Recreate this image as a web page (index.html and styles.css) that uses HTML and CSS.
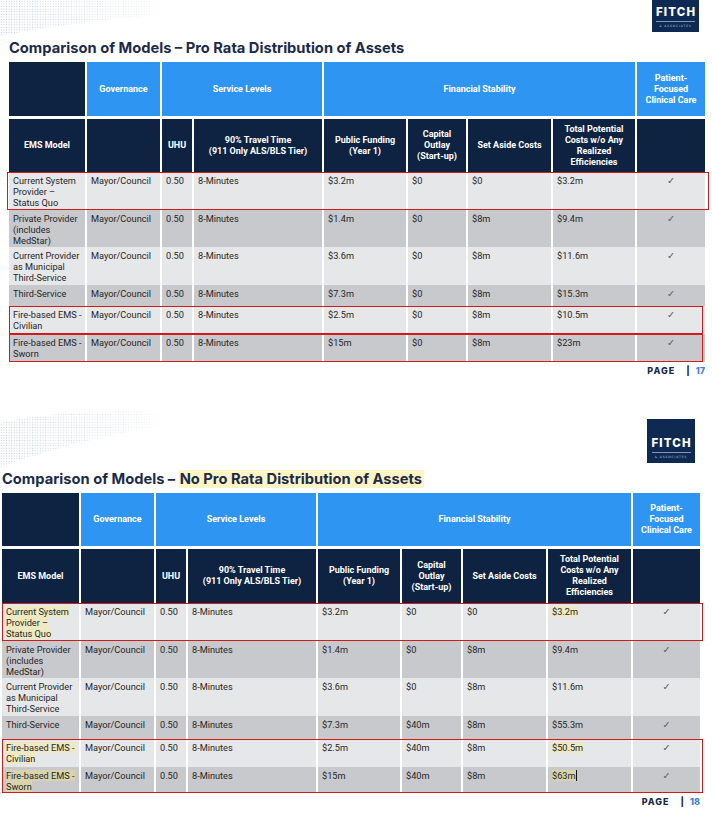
FILE: index.html
```html
<!DOCTYPE html>
<html lang="en">
<head>
<meta charset="utf-8">
<title>Comparison of Models</title>
<link rel="stylesheet" href="styles.css">
</head>
<body>

<section class="slide slide-1">
  <div class="top top-1">
    <svg class="wave wave-1" width="170" height="36" viewBox="0 0 170 36" aria-hidden="true">
      <defs>
        <pattern id="dots1" width="2.6" height="2.6" patternUnits="userSpaceOnUse">
          <circle cx="1.3" cy="1.3" r="0.6" fill="#b7c3d1"/>
        </pattern>
        <linearGradient id="fade1" x1="0" x2="1" y1="0" y2="0">
          <stop offset="0" stop-color="#fff" stop-opacity="0.9"/>
          <stop offset="0.75" stop-color="#fff" stop-opacity="0.35"/>
          <stop offset="1" stop-color="#fff" stop-opacity="0"/>
        </linearGradient>
        <mask id="m1"><rect width="170" height="36" fill="url(#fade1)"/></mask>
      </defs>
      <path d="M0,0 L170,0 L170,14 C120,18 60,24 0,36 Z" fill="url(#dots1)" mask="url(#m1)"/>
    </svg>
    <div class="logo logo-1">
      <span class="logo-name">FITCH</span>
      <span class="logo-rule"></span>
      <span class="logo-sub">&amp; ASSOCIATES</span>
    </div>
  </div>

  <h1 class="title title-1">Comparison of Models – Pro Rata Distribution of Assets</h1>

  <div class="table table-1">
    <div class="hd1 navy c1"></div>
    <div class="hd1 c2">Governance</div>
    <div class="hd1 c3 span2">Service Levels</div>
    <div class="hd1 c5 span4">Financial Stability</div>
    <div class="hd1 c9">Patient-<br>Focused<br>Clinical Care</div>

    <div class="hd2">EMS Model</div>
    <div class="hd2"></div>
    <div class="hd2">UHU</div>
    <div class="hd2">90% Travel Time<br>(911 Only ALS/BLS Tier)</div>
    <div class="hd2">Public Funding<br>(Year 1)</div>
    <div class="hd2">Capital<br>Outlay<br>(Start-up)</div>
    <div class="hd2">Set Aside Costs</div>
    <div class="hd2">Total Potential<br>Costs w/o Any<br>Realized<br>Efficiencies</div>
    <div class="hd2"></div>

    <div class="row lt r3">
      <div>Current System<br>Provider –<br>Status Quo</div><div>Mayor/Council</div><div>0.50</div><div>8-Minutes</div><div>$3.2m</div><div>$0</div><div>$0</div><div>$3.2m</div><div class="chk">✓</div>
    </div>
    <div class="row dk r4">
      <div>Private Provider<br>(includes<br>MedStar)</div><div>Mayor/Council</div><div>0.50</div><div>8-Minutes</div><div>$1.4m</div><div>$0</div><div>$8m</div><div>$9.4m</div><div class="chk">✓</div>
    </div>
    <div class="row lt r5">
      <div>Current Provider<br>as Municipal<br>Third-Service</div><div>Mayor/Council</div><div>0.50</div><div>8-Minutes</div><div>$3.6m</div><div>$0</div><div>$8m</div><div>$11.6m</div><div class="chk">✓</div>
    </div>
    <div class="row dk r6">
      <div>Third-Service</div><div>Mayor/Council</div><div>0.50</div><div>8-Minutes</div><div>$7.3m</div><div>$0</div><div>$8m</div><div>$15.3m</div><div class="chk">✓</div>
    </div>
    <div class="row lt r7">
      <div>Fire-based EMS -<br>Civilian</div><div>Mayor/Council</div><div>0.50</div><div>8-Minutes</div><div>$2.5m</div><div>$0</div><div>$8m</div><div>$10.5m</div><div class="chk">✓</div>
    </div>
    <div class="row dk r8">
      <div>Fire-based EMS -<br>Sworn</div><div>Mayor/Council</div><div>0.50</div><div>8-Minutes</div><div>$15m</div><div>$0</div><div>$8m</div><div>$23m</div><div class="chk">✓</div>
    </div>

    <div class="mark mark-1a"></div>
    <div class="mark mark-1b"></div>
    <div class="mark mark-1c"></div>
  </div>

  <p class="page-no"><span class="pg-word">PAGE</span><span class="pg-bar">|</span><span class="pg-num">17</span></p>
</section>

<section class="slide slide-2">
  <div class="top top-2">
    <svg class="wave wave-2" width="170" height="75" viewBox="0 0 170 75" aria-hidden="true">
      <defs>
        <pattern id="dots2" width="2.6" height="2.6" patternUnits="userSpaceOnUse">
          <circle cx="1.3" cy="1.3" r="0.6" fill="#b7c3d1"/>
        </pattern>
        <linearGradient id="fade2" x1="0" x2="1" y1="0" y2="0">
          <stop offset="0" stop-color="#fff" stop-opacity="0.9"/>
          <stop offset="0.75" stop-color="#fff" stop-opacity="0.35"/>
          <stop offset="1" stop-color="#fff" stop-opacity="0"/>
        </linearGradient>
        <mask id="m2"><rect width="170" height="75" fill="url(#fade2)"/></mask>
      </defs>
      <path d="M0,28 C50,16 110,16 170,16 L170,30 C115,38 55,52 0,72 Z" fill="url(#dots2)" mask="url(#m2)"/>
    </svg>
    <div class="logo logo-2">
      <span class="logo-name">FITCH</span>
      <span class="logo-rule"></span>
      <span class="logo-sub">&amp; ASSOCIATES</span>
    </div>
  </div>

  <h1 class="title title-2">Comparison of Models – <span class="title-hl">No Pro Rata Distribution of Assets</span></h1>

  <div class="table table-2">
    <div class="hd1 navy c1"></div>
    <div class="hd1 c2">Governance</div>
    <div class="hd1 c3 span2">Service Levels</div>
    <div class="hd1 c5 span4">Financial Stability</div>
    <div class="hd1 c9">Patient-<br>Focused<br>Clinical Care</div>

    <div class="hd2">EMS Model</div>
    <div class="hd2"></div>
    <div class="hd2">UHU</div>
    <div class="hd2">90% Travel Time<br>(911 Only ALS/BLS Tier)</div>
    <div class="hd2">Public Funding<br>(Year 1)</div>
    <div class="hd2">Capital<br>Outlay<br>(Start-up)</div>
    <div class="hd2">Set Aside Costs</div>
    <div class="hd2">Total Potential<br>Costs w/o Any<br>Realized<br>Efficiencies</div>
    <div class="hd2"></div>

    <div class="row lt r3">
      <div><span class="hl">Current System<br>Provider –<br>Status Quo</span></div><div>Mayor/Council</div><div>0.50</div><div>8-Minutes</div><div>$3.2m</div><div>$0</div><div>$0</div><div><span class="hl">$3.2m</span></div><div class="chk">✓</div>
    </div>
    <div class="row dk r4">
      <div>Private Provider<br>(includes<br>MedStar)</div><div>Mayor/Council</div><div>0.50</div><div>8-Minutes</div><div>$1.4m</div><div>$0</div><div>$8m</div><div>$9.4m</div><div class="chk">✓</div>
    </div>
    <div class="row lt r5">
      <div>Current Provider<br>as Municipal<br>Third-Service</div><div>Mayor/Council</div><div>0.50</div><div>8-Minutes</div><div>$3.6m</div><div>$0</div><div>$8m</div><div>$11.6m</div><div class="chk">✓</div>
    </div>
    <div class="row dk r6">
      <div>Third-Service</div><div>Mayor/Council</div><div>0.50</div><div>8-Minutes</div><div>$7.3m</div><div>$40m</div><div>$8m</div><div>$55.3m</div><div class="chk">✓</div>
    </div>
    <div class="row lt r7">
      <div><span class="hl">Fire-based EMS -<br>Civilian</span></div><div>Mayor/Council</div><div>0.50</div><div>8-Minutes</div><div>$2.5m</div><div>$40m</div><div>$8m</div><div><span class="hl">$50.5m</span></div><div class="chk">✓</div>
    </div>
    <div class="row dk r8">
      <div><span class="hl">Fire-based EMS -<br>Sworn</span></div><div>Mayor/Council</div><div>0.50</div><div>8-Minutes</div><div>$15m</div><div>$40m</div><div>$8m</div><div><span class="hl caret">$63m</span></div><div class="chk">✓</div>
    </div>

    <div class="mark mark-2a"></div>
    <div class="mark mark-2b"></div>
  </div>

  <p class="page-no"><span class="pg-word">PAGE</span><span class="pg-bar">|</span><span class="pg-num">18</span></p>
</section>

</body>
</html>
```

FILE: styles.css
```css
* { box-sizing: border-box; }

html, body {
  margin: 0;
  background: #ffffff;
}

body {
  width: 712px;
  font-family: Roboto, "Liberation Sans", Arial, sans-serif;
  color: #262626;
}

/* ---------- slides ---------- */
.slide-1 { padding: 0 7px 0 9px; }
.slide-2 { padding: 15px 12px 0 2px; }

.top {
  display: flex;
  justify-content: space-between;
}
.top-1 { height: 36px; align-items: flex-start; }
.top-2 { height: 75px; align-items: flex-end; }

.wave { display: block; flex: none; }
.wave-1 { margin-left: -9px; }
.wave-2 { margin-left: -2px; align-self: flex-start; }

/* ---------- logo ---------- */
.logo {
  flex: none;
  width: 47px;
  height: 44px;
  background: #0f2a52;
  display: flex;
  flex-direction: column;
  align-items: center;
  justify-content: flex-end;
  padding-bottom: 4px;
  overflow: hidden;
}
.logo-1 { margin-top: -12px; margin-right: 6px; }
.logo-2 { width: 48px; margin-right: 5px; margin-bottom: 7px; }

.logo-name {
  font-family: Inter, "DejaVu Sans", sans-serif;
  font-weight: 800;
  font-size: 11.5px;
  line-height: 11px;
  letter-spacing: 1.1px;
  margin-right: -1.1px;
  color: #ffffff;
}
.logo-rule {
  display: block;
  width: 39px;
  height: 1px;
  background: #7f97b8;
  margin: 3px 0 2px;
}
.logo-sub {
  font-family: "DejaVu Sans", sans-serif;
  font-size: 3px;
  line-height: 4px;
  letter-spacing: 0.9px;
  color: #b9c6da;
  white-space: nowrap;
}

/* ---------- titles ---------- */
.title {
  margin: 0;
  font-family: Inter, "DejaVu Sans", sans-serif;
  font-weight: 700;
  font-size: 14.7px;
  line-height: 18px;
  color: #1b2b4b;
  white-space: nowrap;
}
.title-1 { margin: 3px 0 5px; }
.title-2 { margin: 0 0 5px; }
.title-hl { background: #fff5c4; padding: 0 2px 0 1px; }

/* ---------- tables ---------- */
.table {
  display: grid;
  column-gap: 2px;
  row-gap: 0;
}
.table-1 {
  grid-template-columns: 76px 73px 30px 128px 82px 58px 83px 82px 68px;
  grid-template-rows: 57px 53px 38px 37px 38px 21px 28px 28px;
}
.table-2 {
  grid-template-columns: 77px 73px 30px 128px 82px 59px 83px 83px 67px;
  grid-template-rows: 56px 54px 38px 37px 38px 23px 28px 26px;
}

.hd1,
.hd2 {
  display: flex;
  align-items: center;
  justify-content: center;
  text-align: center;
  color: #ffffff;
  font-weight: 700;
  font-size: 9px;
  line-height: 11px;
}
.hd1 {
  grid-row: 1;
  background: #2f95f2;
  margin-bottom: 3px;
}
.hd1.navy { background: #0e2341; }
.hd2 { grid-row: 2; background: #0e2341; }

.c1 { grid-column: 1; }
.c2 { grid-column: 2; }
.c3 { grid-column: 3 / span 2; }
.c5 { grid-column: 5 / span 4; }
.c9 { grid-column: 9; }

/* body rows: every cell is placed explicitly so the selection boxes can overlap */
.row { display: contents; }
.r3 > div { grid-row: 3; }
.r4 > div { grid-row: 4; }
.r5 > div { grid-row: 5; }
.r6 > div { grid-row: 6; }
.r7 > div { grid-row: 7; }
.r8 > div { grid-row: 8; }
.row > div:nth-child(1) { grid-column: 1; }
.row > div:nth-child(2) { grid-column: 2; }
.row > div:nth-child(3) { grid-column: 3; }
.row > div:nth-child(4) { grid-column: 4; }
.row > div:nth-child(5) { grid-column: 5; }
.row > div:nth-child(6) { grid-column: 6; }
.row > div:nth-child(7) { grid-column: 7; }
.row > div:nth-child(8) { grid-column: 8; }
.row > div:nth-child(9) { grid-column: 9; }

.row > div {
  padding: 3px 4px 0;
  font-size: 9.2px;
  line-height: 11px;
  color: #262626;
  white-space: nowrap;
}
.row.lt > div { background: #e6e7e9; }
.row.dk > div { background: #c8c9cc; }
.row > .chk {
  text-align: center;
  font-family: "DejaVu Sans", sans-serif;
  font-size: 9.5px;
  color: #5e5e5e;
}

.hl { background: rgba(255, 236, 110, 0.32); }
.caret { border-right: 1px solid #111111; }

/* ---------- red selection boxes ---------- */
.mark {
  border: 1px solid #d11b1b;
  pointer-events: none;
}
.mark-1a { grid-row: 3; grid-column: 1 / 10; margin: 0 -4px 0 -2px; }
.mark-1b { grid-row: 7; grid-column: 1 / 10; margin-right: 2px; }
.mark-1c { grid-row: 8; grid-column: 1 / 10; margin-right: 2px; }
.mark-2a { grid-row: 3; grid-column: 1 / 10; margin-right: -3px; }
.mark-2b { grid-row: 7 / 9; grid-column: 1 / 10; margin-right: -3px; }

/* ---------- page numbers ---------- */
.page-no {
  margin: 0;
  text-align: right;
  line-height: 18px;
  font-family: Inter, "DejaVu Sans", sans-serif;
  font-weight: 800;
  font-size: 9px;
  color: #1b2b4b;
}
.pg-word { letter-spacing: 1px; }
.pg-bar { margin: 0 6px 0 11px; }
.pg-num { color: #3b7fd6; }
```
